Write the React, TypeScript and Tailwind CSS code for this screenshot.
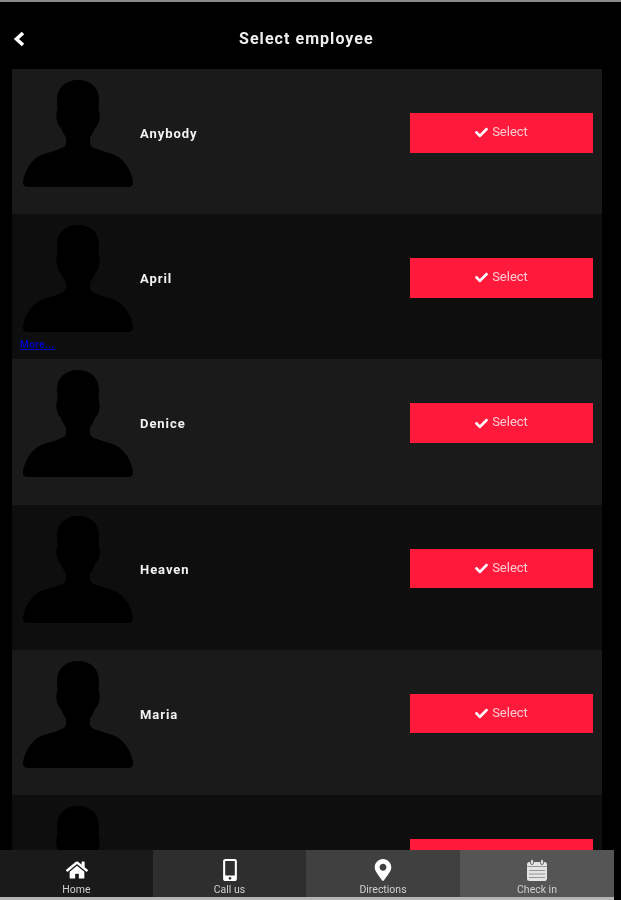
import { FaCheck, FaHome, FaMobileAlt, FaMapMarkerAlt } from "react-icons/fa";

const people = ["Anybody", "April", "Denice", "Heaven", "Maria", ""];

function Silhouette() {
  return (
    <svg viewBox="0 0 110 108" className="w-[110px] h-[108px] shrink-0 blur-[0.4px]" fill="#000">
      <path d="M55 0 C68 0 76 8 76 20 L75.5 30 C77 32 77 37 76 41 C75 45 73 47 72 48 C71 52 68 55 67 58 L67 63 C67 66 70 68 74 69 C82 72 88 73 94 76 C102 81 108 90 110 101 C110.5 105 109 107 105 107 L6 107 C1 107 -0.5 105 0 101 C2 90 8 81 16 76 C22 73 30 72 36 69 C40 68 43 66 43 63 L43 58 C42 55 39 52 38 48 C37 47 35 45 34 41 C33 37 33 32 34.5 30 L34 20 C34 8 42 0 55 0 Z" />
    </svg>
  );
}

function CheckInIcon() {
  return (
    <svg viewBox="0 0 22 22" className="w-[22px] h-[22px] blur-[0.3px]">
      <rect x="1" y="3" width="20" height="19" rx="2.5" fill="#e4e4e4" />
      <rect x="4.5" y="0.5" width="3" height="5" rx="1.5" fill="#e4e4e4" stroke="#555555" strokeWidth="0.8" />
      <rect x="14.5" y="0.5" width="3" height="5" rx="1.5" fill="#e4e4e4" stroke="#555555" strokeWidth="0.8" />
      <path d="M1 7.5H21M3 11.5H19M3 15H19M3 18.5H19" stroke="#8d8d8d" strokeWidth="0.9" />
    </svg>
  );
}

function Row({ name, index }: { name: string; index: number }) {
  const light = index % 2 === 0;
  return (
    <div className={`relative h-[145.2px] shrink-0 flex items-start pl-[11px] pr-[9px] pt-[11px] ${light ? "bg-[#1a1a1a]" : "bg-[#0e0e0e]"}`}>
      <Silhouette />
      <div className="ml-[7px] mt-[44px] text-[13px] leading-[20px] font-bold tracking-[0.95px] text-[#f2f2f2] blur-[0.4px]">{name}</div>
      {name ? (
        <button className="ml-auto mt-[33px] h-[39.6px] w-[183px] flex items-center justify-center gap-[4px] bg-[#ff1a3c] text-[13px] text-[#ffc9d2] blur-[0.4px]">
          <FaCheck className="text-white text-[13px]" />
          <span className="mt-[-2px]">Select</span>
        </button>
      ) : (
        <div className="ml-auto mt-[33px] h-[39.6px] w-[183px] bg-[#ff1a3c]" />
      )}
      {name === "April" && (
        <a className="absolute left-[8px] top-[125px] text-[10px] leading-[12px] font-bold tracking-[0.4px] text-[#0000c8] underline blur-[0.6px]">More...</a>
      )}
    </div>
  );
}

const tabs = [
  { label: "Home", icon: <FaHome className="text-[22px] text-white" />, bg: "bg-[#1a1a1a]" },
  { label: "Call us", icon: <FaMobileAlt className="text-[22px] text-white" />, bg: "bg-[#2e2e2e]" },
  { label: "Directions", icon: <FaMapMarkerAlt className="text-[22px] text-white" />, bg: "bg-[#404040]" },
  { label: "Check in", icon: <CheckInIcon />, bg: "bg-[#555555]" },
];

export default function App() {
  return (
    <div className="h-[900px] w-[621px] overflow-hidden bg-black flex flex-col font-['Roboto',sans-serif]">
      <div className="h-[2px] shrink-0 bg-[#8a8a8a]" />
      <header className="h-[67px] shrink-0 flex items-center pl-[13px] pt-[7px]">
        <svg viewBox="0 0 13 16" className="w-[13px] h-[16px] shrink-0">
          <path d="M10 2 L3.5 8 L10 14" fill="none" stroke="#fff" strokeWidth="3.6" />
        </svg>
        <h1 className="ml-[213px] text-[16px] font-bold tracking-[1.05px] text-[#eeeeee] blur-[0.4px]">Select employee</h1>
      </header>
      <main className="flex-1 min-h-0 overflow-hidden ml-[12px] w-[590px] flex flex-col">
        {people.map((p, i) => (
          <Row key={i} name={p} index={i} />
        ))}
      </main>
      <nav className="h-[47px] w-[614px] shrink-0 grid grid-cols-[153px_153px_154px_154px]">
        {tabs.map(({ label, icon, bg }) => (
          <div key={label} className={`flex flex-col items-center justify-end pb-[1px] ${bg}`}>
            {icon}
            <span className="mt-[3px] text-[10.5px] leading-[12px] text-[#cfcfcf] blur-[0.4px]">{label}</span>
          </div>
        ))}
      </nav>
      <div className="h-[3px] w-[614px] shrink-0 bg-[#b5b5b5]" />
    </div>
  );
}
